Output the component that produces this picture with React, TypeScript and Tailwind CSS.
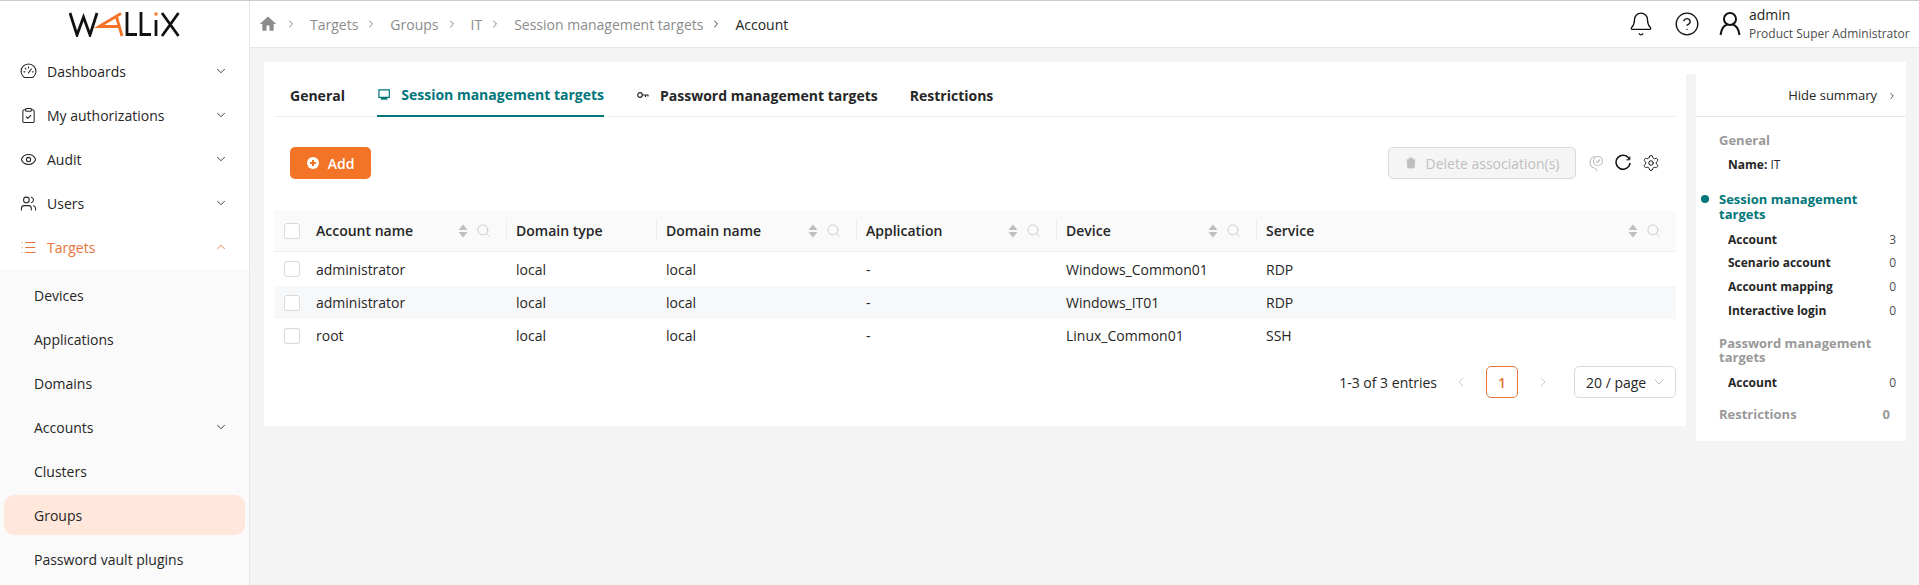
import React from "react";
import {
  Bell,
  ChevronDown,
  ChevronLeft,
  ChevronRight,
  ChevronUp,
  CircleHelp,
  ClipboardCheck,
  Eye,
  List,
  Search,
  Settings,
  Trash,
  Users,
} from "lucide-react";

const font = { fontFamily: '"Open Sans", sans-serif' };

function DashboardIcon({ size, strokeWidth, className }: { size: number; strokeWidth: number; className?: string }) {
  return (
    <svg width={size} height={size} viewBox="0 0 24 24" fill="none" stroke="currentColor" strokeWidth={strokeWidth} strokeLinecap="round" className={className}>
      <path d="M6 20.5 A10.5 10.5 0 1 1 18 20.5 Z" />
      <path d="M12 14 L16 8.5 M5.5 12.5 H7 M7.5 7.5 L8.5 8.5 M12 5.5 V7 M17.5 12.5 H18.5" />
    </svg>
  );
}

const mainMenu = [
  { label: "Dashboards", icon: DashboardIcon },
  { label: "My authorizations", icon: ClipboardCheck },
  { label: "Audit", icon: Eye },
  { label: "Users", icon: Users },
];

const subMenu = ["Devices", "Applications", "Domains", "Accounts", "Clusters", "Groups", "Password vault plugins"];

const rows = [
  ["administrator", "local", "local", "-", "Windows_Common01", "RDP"],
  ["administrator", "local", "local", "-", "Windows_IT01", "RDP"],
  ["root", "local", "local", "-", "Linux_Common01", "SSH"],
];

const columns = ["Account name", "Domain type", "Domain name", "Application", "Device", "Service"];

// Logo drawn by hand, the A is the orange arrow shape
function Logo() {
  return (
    <svg width="111" height="25" viewBox="0 0 111 25" fill="none">
      <path d="M1 1 L8 23 L14.5 5 L21 23 L28 1" stroke="#111" strokeWidth="2.8" />
      <path d="M52 1.5 L30 14.5 L50 14.5 M47.5 5 L53 24" stroke="#f37327" strokeWidth="2.8" />
      <path d="M58 0 V22.5 H68 M72 0 V22.5 H82" stroke="#111" strokeWidth="2.8" />
      <path d="M87 8 V24" stroke="#111" strokeWidth="2.8" />
      <path d="M85.5 0.5 H88.5 V3.5 H85.5 Z" fill="#f37327" />
      <path d="M93 1 L109.5 24 M109.5 1 L93 24" stroke="#111" strokeWidth="2.8" />
    </svg>
  );
}

function Sidebar() {
  return (
    <aside className="w-[250px] h-[585px] shrink-0 bg-white border-r border-[#e6e6e6] flex flex-col">
      <div className="h-[48px] flex items-start pt-[11px] pl-[69px]">
        <Logo />
      </div>
      {mainMenu.map(({ label, icon: Icon }) => (
        <div key={label} className="h-[44px] flex items-center pl-[20px] pr-[21px] text-[14px] text-[#262626]">
          <Icon size={17} strokeWidth={1.5} className="mr-[10px]" />
          <span className="flex-1">{label}</span>
          <ChevronDown size={14} strokeWidth={1.5} />
        </div>
      ))}
      <div className="h-[44px] flex items-center pl-[20px] pr-[21px] text-[14px] text-[#e8743b]">
        <List size={17} strokeWidth={1.5} className="mr-[10px]" />
        <span className="flex-1">Targets</span>
        <ChevronUp size={14} strokeWidth={1.5} />
      </div>
      <div className="flex-1 bg-[#fafafa] pt-[4px]">
        {subMenu.map((item) => (
          <div
            key={item}
            className={
              item === "Groups"
                ? "h-[40px] my-[2px] mx-[4px] pl-[30px] flex items-center rounded-[10px] bg-[#ffe7dc] text-[14px] text-[#262626]"
                : "h-[44px] pl-[34px] pr-[21px] flex items-center text-[14px] text-[#262626]"
            }
          >
            <span className="flex-1">{item}</span>
            {item === "Accounts" && <ChevronDown size={14} strokeWidth={1.5} />}
          </div>
        ))}
      </div>
    </aside>
  );
}

function Topbar() {
  const crumbs = ["Targets", "Groups", "IT", "Session management targets"];
  return (
    <header className="h-[47px] shrink-0 bg-white border-b border-[#e6e6e6] flex items-center pl-[9px] text-[14px] text-[#8c8c8c]">
      <svg width="18" height="18" viewBox="0 0 24 24" fill="#8c8c8c" className="mr-[8px]">
        <path d="M10 21v-7h4v7h5.5v-9H23L12 2 1 12h3.5v9z" />
      </svg>
      {crumbs.map((c) => (
        <React.Fragment key={c}>
          <ChevronRight size={12} strokeWidth={1.8} className="mr-[13px] text-[#737373]" />
          <span className="mr-[7px]">{c}</span>
        </React.Fragment>
      ))}
      <ChevronRight size={12} strokeWidth={1.8} className="mr-[13px] text-[#262626]" />
      <span className="text-[#262626]">Account</span>
      <div className="ml-auto flex items-center text-[#111]">
        <Bell size={26} strokeWidth={1.2} className="mr-[20px]" />
        <CircleHelp size={26} strokeWidth={1.2} className="mr-[19px]" />
        <svg width="22" height="26" viewBox="0 0 22 26" fill="none" stroke="#111" strokeWidth="2" className="mr-[8px]">
          <circle cx="11" cy="8" r="6" />
          <path d="M1.5 24 C2.5 17 6 14 8.5 13.5 M20.5 24 C19.5 17 16 14 13.5 13.5" />
        </svg>
        <div className="w-[170px] flex flex-col">
          <span className="text-[14px] leading-[19px] text-[#262626]">admin</span>
          <span className="text-[12px] leading-[19px] text-[#4d4d4d]">Product Super Administrator</span>
        </div>
      </div>
    </header>
  );
}

function Checkbox() {
  return <span className="block w-[16px] h-[16px] rounded-[3px] border border-[#d9d9d9] bg-white" />;
}

function SortIcons() {
  return (
    <span className="flex items-center gap-[8px] text-[#bfbfbf]">
      <svg width="10" height="14" viewBox="0 0 10 14" fill="#bfbfbf">
        <path d="M5 0.5 L9.5 6 H0.5 Z M5 13.5 L0.5 8 H9.5 Z" />
      </svg>
      <Search size={15} strokeWidth={1.2} />
    </span>
  );
}

function AccountsTable() {
  const grid = "grid grid-cols-[232px_150px_200px_200px_200px_1fr]";
  return (
    <div className="text-[14px] text-[#262626]">
      <div className={`${grid} h-[42px] bg-[#fafafa] border-b border-[#eeeeee] items-center font-semibold`}>
        {columns.map((c, i) => (
          <div key={c} className={i === 0 ? "flex items-center pl-[10px] pr-[15px]" : "flex items-center pl-[9px] pr-[15px] h-[22px] border-l border-[#eeeeee]"}>
            {i === 0 && (
              <span className="mr-[16px]">
                <Checkbox />
              </span>
            )}
            <span className="flex-1">{c}</span>
            {c !== "Domain type" && <SortIcons />}
          </div>
        ))}
      </div>
      {rows.map((row, r) => (
        <div key={r} className={`${grid} ${r === 0 ? "h-[34px]" : "h-[33px]"} items-center ${r === 1 ? "bg-[#f7f8fa]" : "bg-white"}`}>
          {row.map((cell, i) => (
            <div key={i} className={i === 0 ? "flex items-center pl-[10px]" : "pl-[10px]"}>
              {i === 0 && (
                <span className="mr-[16px]">
                  <Checkbox />
                </span>
              )}
              {cell}
            </div>
          ))}
        </div>
      ))}
    </div>
  );
}

function Pagination() {
  return (
    <div className="mt-[14px] h-[32px] flex items-center justify-end text-[14px] text-[#262626]">
      <span className="mr-[16px]">1-3 of 3 entries</span>
      <ChevronLeft size={16} strokeWidth={1.2} className="text-[#bfbfbf] mr-[17px]" />
      <span className="w-[32px] h-[32px] rounded-[5px] border border-[#e8743b] flex items-center justify-center text-[#e8743b] font-semibold mr-[17px]">
        1
      </span>
      <ChevronRight size={16} strokeWidth={1.2} className="text-[#bfbfbf] mr-[23px]" />
      <div className="w-[102px] h-[32px] rounded-[5px] border border-[#d9d9d9] flex items-center pl-[11px] pr-[8px]">
        <span className="flex-1">20 / page</span>
        <ChevronDown size={16} strokeWidth={1.1} className="text-[#a6a6a6]" />
      </div>
    </div>
  );
}

function MainCard() {
  return (
    <section className="w-[1422px] h-[364px] shrink-0 bg-white px-[10px] pt-[12px]">
      <div className="h-[43px] border-b border-[#eeeeee] flex text-[14px] font-bold text-[#262626] whitespace-nowrap">
        <div className="w-[103px] pl-[16px] flex items-center">General</div>
        <div className="w-[227px] h-[43px] border-b-[2px] border-[#00767a] flex items-center text-[#00767a]">
          <svg width="13" height="13" viewBox="0 0 13 13" fill="none" stroke="currentColor" className="ml-[1px] mr-[11px]">
            <path d="M1 1.5 H12 V9.5 H1 Z" strokeWidth="1.3" />
            <path d="M3 11 H10" strokeWidth="2" />
          </svg>
          <span>Session management targets</span>
        </div>
        <div className="ml-[33px] flex items-center">
          <svg width="12" height="8" viewBox="0 0 12 8" fill="none" stroke="#262626" strokeWidth="1.2" className="mr-[11px]">
            <circle cx="3" cy="4" r="2.3" />
            <path d="M5.5 4 H11.5 M8.5 4 V6 M11 4 V5.5" />
          </svg>
          <span>Password management targets</span>
        </div>
        <div className="ml-[32px] flex items-center">Restrictions</div>
      </div>
      <div className="mt-[30px] h-[32px] flex items-center pl-[16px]">
        <button className="w-[81px] h-[32px] rounded-[5px] bg-[#f37327] text-white text-[14px] font-semibold flex items-center justify-center gap-[9px]">
          <span className="w-[12px] h-[12px] rounded-full bg-white relative">
            <span className="absolute left-[3px] top-[5px] w-[6px] h-[2px] bg-[#f37327]" />
            <span className="absolute left-[5px] top-[3px] w-[2px] h-[6px] bg-[#f37327]" />
          </span>
          Add
        </button>
        <div className="ml-auto flex items-center mr-[16px]">
          <div className="w-[188px] h-[32px] rounded-[5px] border border-[#d9d9d9] bg-[#f5f5f5] flex items-center justify-center gap-[9px] text-[14px] text-[#bfbfbf]">
            <Trash size={12} fill="#bfbfbf" strokeWidth={1.5} />
            Delete association(s)
          </div>
          <svg width="18" height="18" viewBox="0 0 18 18" fill="none" stroke="#bfbfbf" strokeWidth="1.2" className="ml-[11px]">
            <path d="M7 14 A6 6 0 0 1 8 2.5 M8 14 L10 17" />
            <circle cx="11" cy="7" r="4.5" />
            <path d="M9 7.5 L10.5 8.5 L13 5.5" />
          </svg>
          <svg width="18" height="18" viewBox="0 0 18 18" fill="none" stroke="#111" strokeWidth="1.5" className="ml-[9px]">
            <path d="M15.5 5.5 A7 7 0 1 0 16 9" />
            <path d="M15.8 2.5 V5.8 H12.5" strokeWidth="1" />
          </svg>
          <Settings size={18} strokeWidth={1.3} className="ml-[10px] text-[#111]" />
        </div>
      </div>
      <div className="mt-[31px]">
        <AccountsTable />
      </div>
      <Pagination />
    </section>
  );
}

function CountRow({ label, count }: { label: string; count: number }) {
  return (
    <div className="h-[23.6px] flex items-center pl-[32px] pr-[10px] text-[12px]">
      <span className="flex-1 font-bold text-[#262626]">{label}</span>
      <span className="text-[#4d4d4d]">{count}</span>
    </div>
  );
}

function Summary() {
  return (
    <aside className="w-[210px] h-[379px] shrink-0 bg-white">
      <div className="h-[55px] pt-[14px] border-b border-[#e6e6e6] flex items-center justify-end pr-[9px] text-[13px] text-[#262626]">
        Hide summary
        <ChevronRight size={10} strokeWidth={2} className="ml-[10px]" />
      </div>
      <div className="pl-[23px] mt-[14px] text-[13px] leading-[18px] font-bold text-[#999999]">General</div>
      <div className="pl-[32px] mt-[7px] text-[12px] leading-[18px] text-[#262626]">
        <span className="font-bold">Name:</span> IT
      </div>
      <div className="relative pl-[23px] pr-[20px] mt-[18px] text-[13px] leading-[15px] font-bold text-[#00767a]">
        <span className="absolute left-[5px] top-[3px] w-[8px] h-[8px] rounded-full bg-[#00767a]" />
        Session management targets
      </div>
      <div className="mt-[6px]">
        <CountRow label="Account" count={3} />
        <CountRow label="Scenario account" count={0} />
        <CountRow label="Account mapping" count={0} />
        <CountRow label="Interactive login" count={0} />
      </div>
      <div className="pl-[23px] pr-[20px] mt-[14px] text-[13px] leading-[14px] font-bold text-[#999999]">
        Password management targets
      </div>
      <div className="mt-[7px]">
        <CountRow label="Account" count={0} />
      </div>
      <div className="h-[20px] mt-[10px] pl-[23px] pr-[16px] flex items-center text-[13px] font-bold text-[#999999]">
        <span className="flex-1">Restrictions</span>
        <span>0</span>
      </div>
    </aside>
  );
}

export default function App() {
  return (
    <div className="h-[585px] overflow-hidden bg-[#f4f4f4] flex flex-col" style={font}>
      <div className="h-px shrink-0 bg-[#cccccc]" />
      <div className="flex flex-1">
        <Sidebar />
        <div className="flex-1 flex flex-col">
          <Topbar />
          <main className="flex items-start pl-[14px] pt-[14px]">
            <MainCard />
            <div className="w-[10px] h-[12px] shrink-0 bg-white" />
            <Summary />
          </main>
        </div>
      </div>
    </div>
  );
}
